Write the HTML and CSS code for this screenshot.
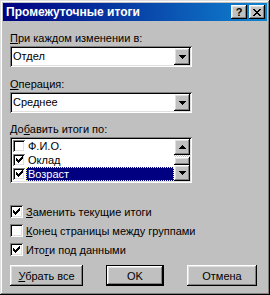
FILE: index.html
```html
<!DOCTYPE html>
<html lang="ru">
<head>
<meta charset="UTF-8">
<title>Промежуточные итоги</title>
<link rel="stylesheet" href="styles.css">
</head>
<body>

<div class="dialog">
  <div class="titlebar">
    <span class="title">Промежуточные итоги</span>
    <div class="tbtns">
      <span class="tbtn q">?</span>
      <span class="tbtn">
        <svg width="8" height="7" viewBox="0 0 8 7"><path d="M0 0h2v1h-2z M6 0h2v1h-2z M1 1h2v1h-2z M5 1h2v1h-2z M2 2h4v1h-4z M3 3h2v1h-2z M2 4h4v1h-4z M1 5h2v1h-2z M5 5h2v1h-2z M0 6h2v1h-2z M6 6h2v1h-2z" fill="#000"/></svg>
      </span>
    </div>
  </div>

  <div class="content">
    <div class="lbl first"><u>П</u>ри каждом изменении в:</div>
    <div class="combo">
      <span class="val">Отдел</span>
      <span class="drop"><svg width="7" height="4" viewBox="0 0 7 4"><path d="M0 0h7v1h-7z M1 1h5v1h-5z M2 2h3v1h-3z M3 3h1v1h-1z" fill="#000"/></svg></span>
    </div>

    <div class="lbl"><u>О</u>перация:</div>
    <div class="combo">
      <span class="val">Среднее</span>
      <span class="drop"><svg width="7" height="4" viewBox="0 0 7 4"><path d="M0 0h7v1h-7z M1 1h5v1h-5z M2 2h3v1h-3z M3 3h1v1h-1z" fill="#000"/></svg></span>
    </div>

    <div class="lbl third">До<u>б</u>авить итоги по:</div>
    <div class="list">
      <div class="rows">
        <div class="row"><span class="chk small"></span><span class="txt">Ф.И.О.</span></div>
        <div class="row"><span class="chk small on"><svg width="7" height="7" viewBox="0 0 7 7"><path d="M6 0h1v1h-1z M5 1h2v1h-2z M0 2h1v1h-1z M4 2h3v1h-3z M0 3h2v1h-2z M3 3h3v1h-3z M0 4h5v1h-5z M1 5h3v1h-3z M2 6h1v1h-1z" fill="#000"/></svg></span><span class="txt">Оклад</span></div>
        <div class="row"><span class="chk small on"><svg width="7" height="7" viewBox="0 0 7 7"><path d="M6 0h1v1h-1z M5 1h2v1h-2z M0 2h1v1h-1z M4 2h3v1h-3z M0 3h2v1h-2z M3 3h3v1h-3z M0 4h5v1h-5z M1 5h3v1h-3z M2 6h1v1h-1z" fill="#000"/></svg></span><span class="txt sel">Возраст</span></div>
      </div>
      <div class="scroll">
        <span class="sbtn"><svg width="7" height="4" viewBox="0 0 7 4"><path d="M3 0h1v1h-1z M2 1h3v1h-3z M1 2h5v1h-5z M0 3h7v1h-7z" fill="#000"/></svg></span>
        <span class="track"></span>
        <span class="thumb"></span>
        <span class="sbtn"><svg width="7" height="4" viewBox="0 0 7 4"><path d="M0 0h7v1h-7z M1 1h5v1h-5z M2 2h3v1h-3z M3 3h1v1h-1z" fill="#000"/></svg></span>
      </div>
    </div>

    <div class="opts">
      <div class="opt"><span class="chk on"><svg width="7" height="7" viewBox="0 0 7 7"><path d="M6 0h1v1h-1z M5 1h2v1h-2z M0 2h1v1h-1z M4 2h3v1h-3z M0 3h2v1h-2z M3 3h3v1h-3z M0 4h5v1h-5z M1 5h3v1h-3z M2 6h1v1h-1z" fill="#000"/></svg></span><span><u>З</u>аменить текущие итоги</span></div>
      <div class="opt"><span class="chk"></span><span><u>К</u>онец страницы между группами</span></div>
      <div class="opt"><span class="chk on"><svg width="7" height="7" viewBox="0 0 7 7"><path d="M6 0h1v1h-1z M5 1h2v1h-2z M0 2h1v1h-1z M4 2h3v1h-3z M0 3h2v1h-2z M3 3h3v1h-3z M0 4h5v1h-5z M1 5h3v1h-3z M2 6h1v1h-1z" fill="#000"/></svg></span><span>Ито<u>г</u>и под данными</span></div>
    </div>

    <div class="btns">
      <button class="btn wide"><u>У</u>брать все</button>
      <button class="btn ok">OK</button>
      <button class="btn cancel">Отмена</button>
    </div>
  </div>
</div>

</body>
</html>
```

FILE: styles.css
```css
body {
  margin: 0;
  background: #c0c0c0;
  font-family: "Liberation Sans", Arial, sans-serif;
  font-size: 11px;
  color: #000;
}

.dialog {
  width: 270px;
  height: 295px;
  box-sizing: border-box;
  padding: 3px;
  background: #c0c0c0;
  box-shadow: inset -1px -1px #000, inset 1px 1px #dfdfdf, inset -2px -2px #808080, inset 2px 2px #fff;
}

.titlebar {
  height: 18px;
  display: flex;
  align-items: center;
  justify-content: space-between;
  padding: 0 2px 0 3px;
  background: linear-gradient(90deg, #000080, #1084d0);
  color: #fff;
  font-weight: bold;
  font-size: 12px;
}

.tbtns {
  display: flex;
  gap: 2px;
}

.tbtn, .drop, .sbtn, .thumb, .btn {
  background: #c0c0c0;
  box-shadow: inset -1px -1px #000, inset 1px 1px #fff, inset -2px -2px #808080, inset 2px 2px #dfdfdf;
}

.tbtn {
  width: 16px;
  height: 14px;
  display: flex;
  align-items: center;
  justify-content: center;
}

.tbtn.q {
  color: #000;
  font-size: 11px;
  font-weight: bold;
}

.content {
  padding: 0 7px;
}

.lbl {
  line-height: 13px;
  margin-top: 11px;
}

.lbl.third {
  margin-top: 10px;
}

.combo, .list {
  width: 182px;
  box-sizing: border-box;
  padding: 2px;
  margin-top: 1px;
  background: #fff;
  box-shadow: inset 1px 1px #808080, inset -1px -1px #fff, inset 2px 2px #000, inset -2px -2px #dfdfdf;
}

.combo {
  height: 21px;
  display: flex;
}

.val {
  flex: 1;
  padding-left: 1px;
  line-height: 17px;
}

.drop, .sbtn {
  width: 16px;
  display: flex;
  align-items: center;
  justify-content: center;
}

.drop {
  height: 17px;
}

.list {
  height: 46px;
  display: flex;
}

.rows {
  flex: 1;
}

.row {
  height: 14px;
  display: flex;
  align-items: center;
}

.chk {
  width: 13px;
  height: 13px;
  box-sizing: border-box;
  padding: 3px;
  background: #fff;
  box-shadow: inset 1px 1px #808080, inset -1px -1px #fff, inset 2px 2px #000, inset -2px -2px #dfdfdf;
}

.chk svg {
  display: block;
}

.chk.small {
  width: 12px;
  height: 12px;
  margin-left: 1px;
  padding: 2px 3px;
}

.txt {
  flex: 1;
  height: 14px;
  line-height: 14px;
  margin-left: 1px;
  padding-left: 2px;
  box-sizing: border-box;
}

.txt.sel {
  background: #000080;
  color: #fff;
  outline: 1px dotted #ffff80;
  outline-offset: -1px;
}

.scroll {
  width: 16px;
  display: flex;
  flex-direction: column;
}

.sbtn {
  height: 16px;
}

.track {
  height: 2px;
  background-image: repeating-conic-gradient(#fff 0 25%, #c0c0c0 0 50%);
  background-size: 2px 2px;
}

.thumb {
  height: 8px;
}

.opts {
  margin-top: 19px;
  display: flex;
  flex-direction: column;
}

.opt {
  height: 19px;
  display: flex;
  align-items: center;
  gap: 3px;
}

.btns {
  display: flex;
  gap: 23px;
  margin-top: 6px;
}

.btn {
  height: 21px;
  border: none;
  padding: 0;
  font: inherit;
  color: #000;
}

.btn.wide {
  width: 73px;
}

.btn.ok {
  width: 58px;
  box-shadow: inset 0 0 0 1px #000, inset -2px -2px #000, inset 2px 2px #fff, inset -3px -3px #808080, inset 3px 3px #dfdfdf;
}

.btn.cancel {
  width: 70px;
}
```
